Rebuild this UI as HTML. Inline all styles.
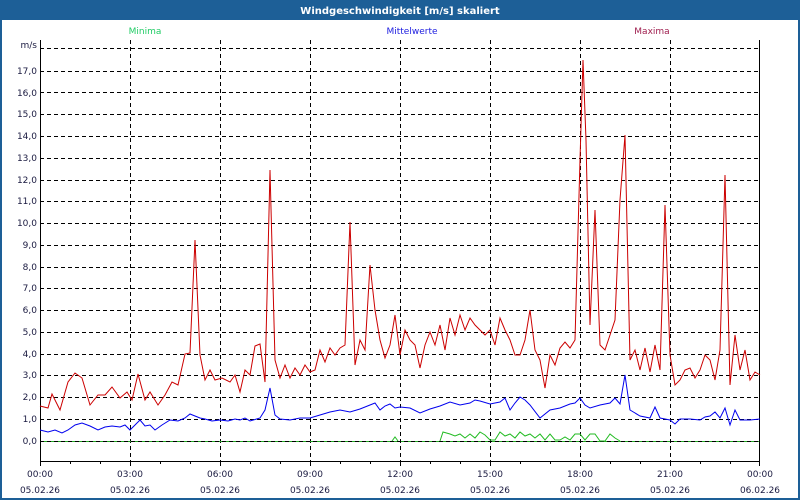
<!DOCTYPE html>
<html><head><meta charset="utf-8"><style>
html,body{margin:0;padding:0;width:800px;height:500px;overflow:hidden;background:#fff}
svg{display:block}
text{font-family:"DejaVu Sans","Liberation Sans",sans-serif;font-size:9px}
</style></head><body>
<svg width="800" height="500" xmlns="http://www.w3.org/2000/svg">
<rect x="0" y="0" width="800" height="500" fill="#1d5f97"/>
<rect x="2" y="20" width="796" height="478" fill="#fff"/>
<text x="400" y="14" text-anchor="middle" fill="#fff" font-weight="bold" style="font-size:10px">Windgeschwindigkeit [m/s] skaliert</text>
<text x="145" y="34" text-anchor="middle" fill="#22cc66">Minima</text>
<text x="412" y="34" text-anchor="middle" fill="#2020e0">Mittelwerte</text>
<text x="652" y="34" text-anchor="middle" fill="#a02050">Maxima</text>
<g stroke="#000" stroke-width="1" stroke-dasharray="4,3" fill="none">
<path d="M40 48.5H760M40 71.5H760M40 92.5H760M40 114.5H760M40 136.5H760M40 158.5H760M40 180.5H760M40 201.5H760M40 223.5H760M40 245.5H760M40 267.5H760M40 288.5H760M40 310.5H760M40 332.5H760M40 354.5H760M40 375.5H760M40 397.5H760M40 419.5H760"/>
<path d="M130.5 40V461M220.5 40V461M310.5 40V461M400.5 40V461M490.5 40V461M580.5 40V461M670.5 40V461"/>
</g>
<path d="M40 441.5H760" stroke="#22aa22" stroke-width="1"/>
<path d="M40 441.5H760" stroke="#000" stroke-width="1" stroke-dasharray="4,3"/>
<path d="M40.5 40V461.5H759.5V40" stroke="#000" fill="none"/>
<path d="M40.5 461v5M70.5 461v3M100.5 461v3M130.5 461v5M160.5 461v3M190.5 461v3M220.5 461v5M250.5 461v3M280.5 461v3M310.5 461v5M340.5 461v3M370.5 461v3M400.5 461v5M430.5 461v3M460.5 461v3M490.5 461v5M520.5 461v3M550.5 461v3M580.5 461v5M610.5 461v3M640.5 461v3M670.5 461v5M700.5 461v3M730.5 461v3M759.5 461v5" stroke="#000"/>
<g fill="#1a1a40" text-anchor="end">
<text x="37" y="48">m/s</text>
<text x="37" y="74">17,0</text><text x="37" y="96">16,0</text><text x="37" y="117">15,0</text><text x="37" y="139">14,0</text><text x="37" y="161">13,0</text><text x="37" y="183">12,0</text><text x="37" y="204">11,0</text><text x="37" y="226">10,0</text><text x="37" y="248">9,0</text><text x="37" y="270">8,0</text><text x="37" y="291">7,0</text><text x="37" y="313">6,0</text><text x="37" y="335">5,0</text><text x="37" y="357">4,0</text><text x="37" y="378">3,0</text><text x="37" y="400">2,0</text><text x="37" y="422">1,0</text><text x="37" y="444">0,0</text>
</g>
<g fill="#1a1a40" text-anchor="middle">
<text x="40" y="477">00:00</text><text x="130" y="477">03:00</text><text x="220" y="477">06:00</text><text x="310" y="477">09:00</text><text x="400" y="477">12:00</text><text x="490" y="477">15:00</text><text x="580" y="477">18:00</text><text x="670" y="477">21:00</text><text x="760" y="477">00:00</text>
<text x="40" y="493">05.02.26</text><text x="130" y="493">05.02.26</text><text x="220" y="493">05.02.26</text><text x="310" y="493">05.02.26</text><text x="400" y="493">05.02.26</text><text x="490" y="493">05.02.26</text><text x="580" y="493">05.02.26</text><text x="670" y="493">05.02.26</text><text x="760" y="493">06.02.26</text>
</g>
<polyline fill="none" stroke="#22bb22" stroke-width="1" points="392,441 395,437 398,441"/>
<polyline fill="none" stroke="#22bb22" stroke-width="1" points="440,441 443,432 450,434 455,436 460,434 465,438 470,434 475,438 480,432 485,435 490,440 495,440 500,432 505,436 510,434 515,438 520,432 525,436 530,434 535,438 540,434 545,440 550,434 555,440 560,440 565,437 570,440 575,434 580,434 585,440 590,434 595,434 600,441 605,441 610,434 615,438 620,441"/>
<polyline fill="none" stroke="#cc0000" stroke-width="1" points="40,406 48,408 52,394 60,410 68,382 75,373 82,378 90,405 98,395 105,395 112,387 120,398 127,392 132,400 138,374 145,400 150,392 158,405 165,395 172,382 178,385 185,354 190,353 195,240 200,355 205,380 210,370 215,380 222,378 230,382 235,375 240,392 245,370 250,375 255,346 260,344 265,382 270,170 275,360 280,378 285,365 290,378 295,368 300,375 305,365 310,372 315,370 320,350 325,362 330,348 335,355 340,348 345,345 350,222 355,365 360,340 365,350 370,265 375,310 380,340 385,358 390,345 395,315 400,355 405,330 410,340 415,345 420,368 425,345 430,332 435,345 440,325 445,350 450,318 455,335 460,315 465,330 470,318 475,325 480,330 485,335 490,330 495,345 500,318 505,330 510,340 515,355 520,355 525,340 530,310 535,350 540,360 545,388 550,355 555,365 560,348 565,342 570,348 575,340 580,160 583,60 586,140 590,325 595,210 600,345 605,350 610,335 615,320 620,200 625,135 630,360 635,350 640,370 645,348 650,372 655,345 660,370 665,205 670,355 675,385 680,380 685,370 690,368 695,378 700,370 705,355 710,360 715,380 720,350 725,175 730,385 735,335 740,370 745,350 750,380 755,372 760,375"/>
<polyline fill="none" stroke="#0000ee" stroke-width="1" points="40,430 48,432 55,430 62,433 68,430 75,425 82,423 90,426 98,430 105,427 112,426 120,427 125,425 130,430 140,420 145,426 150,425 155,430 162,425 170,420 178,421 185,418 190,414 195,416 200,418 205,419 212,421 220,420 228,421 235,419 240,420 245,418 250,421 260,418 265,410 270,388 275,415 280,419 290,420 300,418 310,418 320,415 330,412 340,410 350,412 360,409 370,405 375,403 380,410 385,406 390,404 395,408 400,407 410,408 420,413 430,409 440,406 450,402 460,405 470,403 475,400 480,401 490,404 500,402 505,398 510,410 515,403 520,397 525,400 530,405 540,418 550,410 560,408 570,404 575,403 580,398 585,405 590,408 600,405 610,403 615,398 620,404 625,375 630,410 640,416 650,418 655,407 660,418 665,419 670,420 675,424 680,419 690,419 700,420 705,417 710,416 715,412 720,418 725,408 730,425 735,410 740,420 750,420 760,419"/>
</svg>
</body></html>
